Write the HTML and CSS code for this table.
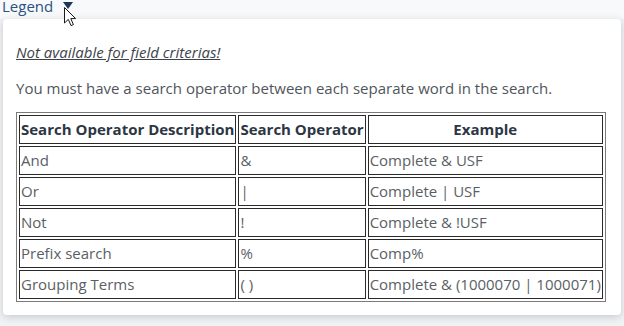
FILE: index.html
```html
<!DOCTYPE html>
<html lang="en">
<head>
<meta charset="utf-8">
<title>Legend</title>
<link rel="stylesheet" href="styles.css">
</head>
<body>
  <div class="legend-bar">
    <span class="legend-label">Legend</span>
    <svg class="caret" width="10" height="7" viewBox="0 0 10 7"><path d="M0 0 H10 L5 7 Z" fill="#1c3857"/></svg>
  </div>
  <svg class="pointer" width="13" height="20" viewBox="0 0 13 20">
    <path d="M0.5 0.5 V16 L4.3 12.4 L7 18.6 L9.4 17.6 L6.8 11.6 H11.6 Z" fill="#fff" stroke="#1a1a1a" stroke-width="1" stroke-linejoin="round"/>
  </svg>

  <div class="legend-panel">
    <p class="note">Not available for field criterias!</p>
    <p class="intro">You must have a search operator between each separate word in the search.</p>
    <table class="ops">
      <thead>
        <tr>
          <th>Search Operator Description</th>
          <th>Search Operator</th>
          <th>Example</th>
        </tr>
      </thead>
      <tbody>
        <tr><td>And</td><td>&amp;</td><td>Complete &amp; USF</td></tr>
        <tr><td>Or</td><td>|</td><td>Complete | USF</td></tr>
        <tr><td>Not</td><td>!</td><td>Complete &amp; !USF</td></tr>
        <tr><td>Prefix search</td><td>%</td><td>Comp%</td></tr>
        <tr><td>Grouping Terms</td><td>( )</td><td>Complete &amp; (1000070 | 1000071)</td></tr>
      </tbody>
    </table>
  </div>
</body>
</html>
```

FILE: styles.css
```css
html, body {
  margin: 0;
  padding: 0;
}

body {
  position: relative;
  width: 624px;
  height: 326px;
  overflow: hidden;
  background: #f2f3f5;
  font-family: "Open Sans", "Noto Sans", sans-serif;
  font-size: 15px;
  color: #4a4f57;
}

.legend-bar {
  height: 19px;
  padding-left: 2px;
  display: flex;
  align-items: flex-start;
  background: #f8f9fa;
}

.legend-label {
  line-height: 13px;
  color: #2b5283;
}

.caret {
  margin-left: 10px;
  margin-top: 2px;
}

.pointer {
  position: absolute;
  left: 64px;
  top: 7px;
  z-index: 2;
}

.legend-panel {
  box-sizing: border-box;
  width: 618px;
  height: 296px;
  margin-left: 3px;
  padding: 23px 16px 0 13px;
  background: #fff;
  border-radius: 4px;
  box-shadow: 0 2px 8px rgba(40, 50, 70, 0.22);
}

.note {
  margin: 0;
  line-height: 20px;
  font-style: italic;
  text-decoration: underline;
  color: #3d434b;
}

.intro {
  margin: 16px 0 14px;
  line-height: 20px;
  color: #50555c;
}

.ops {
  border: 1px solid #7a7a7a;
  border-spacing: 2px;
}

.ops th,
.ops td {
  border: 1px solid #2a2a2a;
  padding: 3px 1px;
  height: 21px;
  line-height: 21px;
  white-space: nowrap;
}

.ops th {
  font-weight: 700;
  color: #2c3644;
  text-align: center;
}

.ops td {
  text-align: left;
  color: #5a5f66;
}
```
